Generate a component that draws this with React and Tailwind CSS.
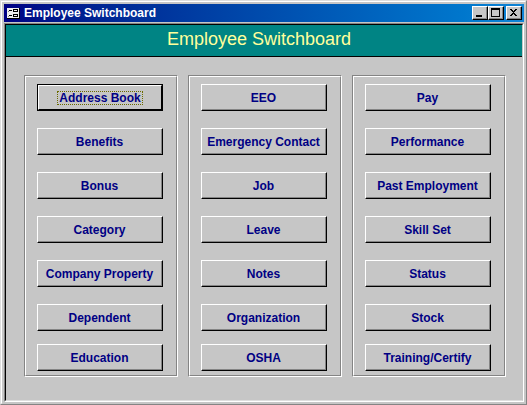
const columns = [
    ["Address Book", "Benefits", "Bonus", "Category", "Company Property", "Dependent", "Education"],
    ["EEO", "Emergency Contact", "Job", "Leave", "Notes", "Organization", "OSHA"],
    ["Pay", "Performance", "Past Employment", "Skill Set", "Status", "Stock", "Training/Certify"],
];

export default function App() {
    return (
        <div className="border border-t-[#dedede] border-l-[#dedede] border-r-[#848484] border-b-[#848484] font-['Liberation_Sans',sans-serif]">
            <div className="border border-t-white border-l-white border-r-[#c6c6c6] border-b-[#c6c6c6] bg-[#c6c6c6] pt-0.5 pr-px pb-px pl-0.5">
                <TitleBar />

                {/* Form area, sunken */}
                <div className="mt-px border border-t-[#848484] border-l-[#848484] border-r-white border-b-white">
                    <div className="border border-t-black border-l-black border-r-[#c6c6c6] border-b-[#dedede]">
                        <h1 className="h-8 border-b border-black bg-[#008484] pr-2.5 text-center text-lg leading-7 text-[#ffff9c]">
                            Employee Switchboard
                        </h1>

                        <main className="grid grid-cols-3 gap-2.5 pt-[18px] pr-4 pb-[23px] pl-[18px]">
                            {columns.map((items, i) => (
                                <Group key={i} items={items} selected={i === 0 ? items[0] : null} />
                            ))}
                        </main>
                    </div>
                </div>
            </div>
        </div>
    );
}

function TitleBar() {
    return (
        <header className="flex h-[18px] items-center bg-linear-to-r from-[#000084] to-[#1084d6] pr-0.5 pl-[3px]">
            <FormIcon />
            <span className="ml-1 flex-1 text-xs font-bold text-white">Employee Switchboard</span>

            <div className="flex">
                <WindowButton label="Minimize">
                    <path d="M3 8h6v2H3z" />
                </WindowButton>
                <WindowButton label="Maximize">
                    <path fillRule="evenodd" d="M2 1h9v9H2zM3 3v6h7V3z" />
                </WindowButton>
                <WindowButton label="Close" className="ml-0.5">
                    <path d="M3 2h2v1h1v1h1V3h1V2h2v1H9v1H8v1H7v1h1v1h1v1h1v1H8V8H7V7H6v1H5v1H3V8h1V7h1V6h1V5H5V4H4V3H3z" />
                </WindowButton>
            </div>
        </header>
    );
}

function WindowButton({ label, className = "", children }) {
    return (
        <button
            type="button"
            aria-label={label}
            className={`h-3.5 w-4 border border-t-white border-l-white border-r-black border-b-black bg-[#c6c6c6] ${className}`}
        >
            <span className="block border-r border-b border-[#848484]">
                <svg className="block h-[11px] w-[13px]" viewBox="0 0 13 11" shapeRendering="crispEdges">
                    {children}
                </svg>
            </span>
        </button>
    );
}

function FormIcon() {
    return (
        <svg className="h-[11px] w-[13px]" viewBox="0 0 13 11" shapeRendering="crispEdges" aria-hidden="true">
            <path fill="#000" d="M0 0h13v11H0z" />
            <path fill="#efefef" d="M0 0h12v10H0z" />
            <path fill="#000" d="M2 2h3v1H2zM2 7h3v1H2z" />
            <path fill="#848484" d="M1 3h1v1H1zM1 8h1v1H1z" />
            <path fill="#000" fillRule="evenodd" d="M6 1h5v3H6zM7 2v1h3V2zM6 6h5v3H6zM7 7v1h3V7z" />
        </svg>
    );
}

function Group({ items, selected }) {
    return (
        <section className="border border-t-[#848484] border-l-[#848484] border-r-white border-b-white">
            <div className="flex flex-col border border-t-white border-l-white border-r-[#848484] border-b-[#848484] pt-[7px] pr-[13px] pb-1 pl-[11px]">
                {items.map((item) => (
                    <FormButton key={item} label={item} selected={item === selected} />
                ))}
            </div>
        </section>
    );
}

function FormButton({ label, selected }) {
    return (
        <button
            type="button"
            className={`mt-[17px] h-[27px] border text-xs font-bold whitespace-nowrap text-[#000084] first:mt-0 last:mt-[13px] ${
                selected ? "border-black" : "border-t-white border-l-white border-r-black border-b-black"
            }`}
        >
            <span
                className={`flex h-full items-center justify-center border-r border-b ${
                    selected
                        ? "border-t border-l border-t-white border-l-white border-r-black border-b-black"
                        : "border-[#848484] pt-0.5"
                }`}
            >
                {selected ? (
                    <span className="border border-dotted border-[#6b6b00] px-px leading-3">{label}</span>
                ) : (
                    label
                )}
            </span>
        </button>
    );
}
